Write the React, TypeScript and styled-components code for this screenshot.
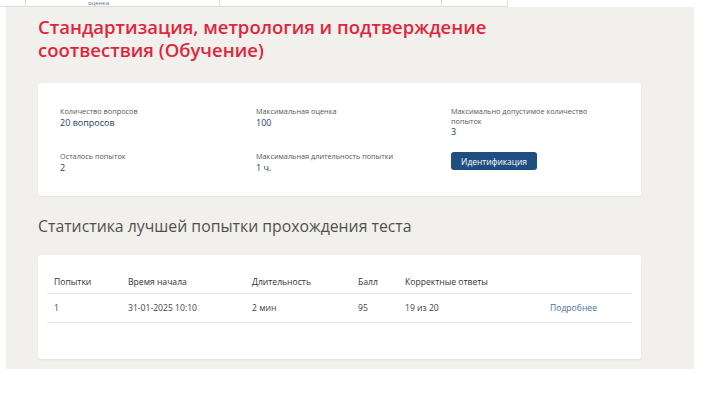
import styled, { createGlobalStyle } from "styled-components";

const GlobalStyle = createGlobalStyle`
  body {
    margin: 0;
    background: #fff;
    font-family: "Open Sans", "Noto Sans", sans-serif;
  }
`;

interface InfoItem {
  label: string;
  value?: string;
  button?: string;
}

const info: InfoItem[] = [
  { label: "Количество вопросов", value: "20 вопросов" },
  { label: "Максимальная оценка", value: "100" },
  { label: "Максимально допустимое количество попыток", value: "3" },
  { label: "Осталось попыток", value: "2" },
  { label: "Максимальная длительность попытки", value: "1 ч." },
  { label: "", button: "Идентификация" },
];

const headers = ["Попытки", "Время начала", "Длительность", "Балл", "Корректные ответы", ""];
const rows = [["1", "31-01-2025 10:10", "2 мин", "95", "19 из 20"]];

export default function App() {
  return (
    <>
      <GlobalStyle />
      <TopStrip>
        <StripCell $w={26} />
        <StripCell $w={194}>
          <StripText>оценка</StripText>
        </StripCell>
        <StripCell $w={222} />
        <StripCell $w={66} />
      </TopStrip>
      <Page>
        <Title>Стандартизация, метрология и подтверждение соотвествия (Обучение)</Title>
        <Card>
          <InfoGrid>
            {info.map((item, i) => (
              <InfoCell key={i}>
                {item.button ? (
                  <Button>{item.button}</Button>
                ) : (
                  <>
                    <Label>{item.label}</Label>
                    <Value>{item.value}</Value>
                  </>
                )}
              </InfoCell>
            ))}
          </InfoGrid>
        </Card>
        <Heading>Статистика лучшей попытки прохождения теста</Heading>
        <TableCard>
          <HeadRow>
            {headers.map((h, i) => (
              <Th key={i}>{h}</Th>
            ))}
          </HeadRow>
          {rows.map((row, y) => (
            <DataRow key={y}>
              {row.map((v, x) => (
                <Td key={x}>{v}</Td>
              ))}
              <Td>
                <Link href="#">Подробнее</Link>
              </Td>
            </DataRow>
          ))}
        </TableCard>
      </Page>
    </>
  );
}

const TopStrip = styled.div`
  display: flex;
  height: 6px;
  width: 508px;
  border-bottom: 1px solid #dedcd8;
`;

const StripCell = styled.div<{ $w: number }>`
  width: ${(p) => p.$w}px;
  border-right: 1px solid #dedcd8;
  box-sizing: border-box;
  position: relative;
`;

const StripText = styled.span`
  position: absolute;
  left: 62px;
  top: 0;
  font-size: 6px;
  line-height: 7px;
  color: #5b6b80;
`;

const Page = styled.div`
  margin-left: 6px;
  width: 688px;
  background: #f2f0ed;
  padding: 8px 0 10px 32px;
  box-sizing: border-box;
`;

const Title = styled.h1`
  margin: 0;
  width: 480px;
  font-size: 18.5px;
  line-height: 23px;
  font-weight: 600;
  color: #e0263c;
`;

const Card = styled.div`
  margin-top: 22px;
  width: 603px;
  background: #fff;
  border-radius: 3px;
  box-shadow: 0 1px 2px rgba(0, 0, 0, 0.06);
  padding: 24px 0 23px 22px;
  box-sizing: border-box;
`;

const InfoGrid = styled.div`
  display: grid;
  grid-template-columns: 196px 195px 150px;
  row-gap: 15px;
`;

const InfoCell = styled.div`
  display: flex;
  flex-direction: column;
  align-items: flex-start;
`;

const Label = styled.div`
  font-size: 7.3px;
  line-height: 9.5px;
  color: #555;
`;

const Value = styled.div`
  font-size: 9px;
  line-height: 11px;
  font-weight: 500;
  color: #1d3d6a;
`;

const Button = styled.button`
  width: 86px;
  height: 18px;
  padding: 0;
  border: none;
  border-radius: 3px;
  background: #1f4f82;
  color: #fff;
  font-family: inherit;
  font-size: 8.4px;
  font-weight: 500;
`;

const Heading = styled.h2`
  margin: 19px 0 18px;
  font-size: 15.8px;
  line-height: 22px;
  font-weight: 400;
  color: #505050;
`;

const TableCard = styled(Card)`
  margin-top: 0;
  padding: 16px 9px 36px;
  height: 104px;
`;

const HeadRow = styled.div`
  display: grid;
  grid-template-columns: 74px 124px 106px 47px 145px 1fr;
  padding-left: 7px;
  height: 22px;
  align-items: center;
  border-bottom: 1px solid #e6e6e6;
`;

const DataRow = styled(HeadRow)`
  height: 28px;
`;

const Th = styled.div`
  font-size: 8.6px;
  font-weight: 500;
  color: #333;
`;

const Td = styled.div`
  font-size: 8.6px;
  color: #444;
`;

const Link = styled.a`
  color: #4a6f99;
  text-decoration: none;
`;
